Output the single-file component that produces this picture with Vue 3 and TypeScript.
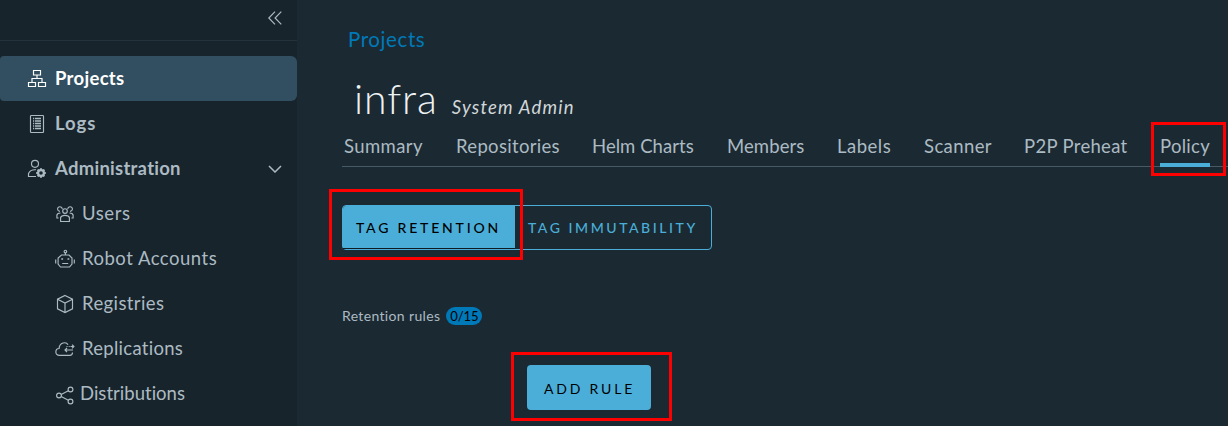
<script setup lang="ts">
type IconName = 'projects' | 'logs' | 'admin' | 'users' | 'robot' | 'cube' | 'cloud' | 'share'

interface NavItem {
  label: string
  icon: IconName
  kind: 'top' | 'sub'
  active?: boolean
  expandable?: boolean
  tracking: number
}

interface Tab {
  label: string
  width: number
  tracking: number
  active?: boolean
}

const navItems: NavItem[] = [
  { label: 'Projects', icon: 'projects', kind: 'top', active: true, tracking: 0.3 },
  { label: 'Logs', icon: 'logs', kind: 'top', tracking: 0.9 },
  { label: 'Administration', icon: 'admin', kind: 'top', expandable: true, tracking: 0.26 },
  { label: 'Users', icon: 'users', kind: 'sub', tracking: 0.6 },
  { label: 'Robot Accounts', icon: 'robot', kind: 'sub', tracking: 0.5 },
  { label: 'Registries', icon: 'cube', kind: 'sub', tracking: 0.4 },
  { label: 'Replications', icon: 'cloud', kind: 'sub', tracking: 0.28 },
  { label: 'Distributions', icon: 'share', kind: 'sub', tracking: 0.02 },
]

const tabs: Tab[] = [
  { label: 'Summary', width: 112, tracking: 0.4 },
  { label: 'Repositories', width: 136, tracking: 0.32 },
  { label: 'Helm Charts', width: 135, tracking: 0.05 },
  { label: 'Members', width: 110, tracking: 0.1 },
  { label: 'Labels', width: 87, tracking: 0.5 },
  { label: 'Scanner', width: 100, tracking: 0.4 },
  { label: 'P2P Preheat', width: 136, tracking: 0.32 },
  { label: 'Policy', width: 50, tracking: 0.3, active: true },
]
</script>

<template>
  <div class="app">
    <aside class="sidebar">
      <div class="collapse">
        <svg class="collapse-icon" viewBox="0 0 14 14"><path d="M7 .7.8 7 7 13.300M13.300.7 7.100 7l6.200 6.300" /></svg>
      </div>
      <nav class="nav">
        <a v-for="item in navItems" :key="item.label" class="nav-item" :class="[item.kind, item.icon, { active: item.active }]">
          <svg class="icon" viewBox="0 0 20 20">
            <template v-if="item.icon === 'projects'">
              <path d="M6.500 1.500h7v4.500h-7zM1.500 13.500h7v4h-7zM11.500 13.500h7v4h-7zM10 6v3.500M5 13v-3.500h10V13" />
            </template>
            <template v-else-if="item.icon === 'logs'">
              <rect x="3.500" y="1.500" width="13" height="17" rx=".7" />
              <path d="M6 4.500h1.200M8 4.500h6M6 7h1.200M8 7h6M6 9.500h1.200M8 9.500h6M6 12h1.200M8 12h6M6 14.500h1.200M8 14.500h6" stroke-width="1.400" />
            </template>
            <template v-else-if="item.icon === 'admin'">
              <circle cx="8" cy="4.800" r="3.500" />
              <path d="M9 17.500H1.500v-3c1.200-2.600 4-4 7.500-3.700" />
              <circle cx="14" cy="14" r="2.900" stroke-width="2.200" />
              <path d="M14 9.200v2M14 16.800v2M9.200 14h2M16.800 14h2M10.600 10.600l1.400 1.400M16 16l1.400 1.400M17.400 10.600 16 12M12 16l-1.400 1.400" stroke-width="2" />
            </template>
            <template v-else-if="item.icon === 'users'">
              <circle cx="10" cy="7" r="2.300" />
              <path d="M5.600 17.500v-4c.4-1.400 1.700-2.100 4.400-2.100s4 .7 4.400 2.100v4zM7.200 5A2.300 2.300 0 1 0 5 7.300M12.800 5a2.300 2.300 0 1 1 2.200 2.300M5.500 9C3.500 9 2.200 9.700 1.900 11v3h1.700M14.500 9c2 0 3.300.7 3.600 2v3h-1.700" />
            </template>
            <template v-else-if="item.icon === 'robot'">
              <circle cx="10.400" cy="2.500" r="1.300" />
              <path d="M10.400 4v2M6.500 6h7.500l3 3v6l-2.500 3h-9l-2.400-3V9zM.7 10.500v4M19.300 10.500v4M7.200 14.500h6" />
              <path d="M6.300 10h1.800M12.500 10h1.800" stroke-width="1.600" />
            </template>
            <template v-else-if="item.icon === 'cube'">
              <path d="m10 1.500 7.500 3.700v9.600L10 18.500l-7.500-3.700V5.200zM2.500 5.200 10 9l7.500-3.800M10 9v9.500" />
            </template>
            <template v-else-if="item.icon === 'cloud'">
              <path d="M17.500 13.500c0 1.900-.9 2.800-2.700 2.800H4.500c-5 0-4.600-6.600-.4-6.800C4.400 3.500 11.200 2.300 13 5.700" />
              <path d="M10 11h8M12 9l-2 2 2 2M11.500 7.500h1M13.700 7.500h1M15.500 7.500h3.200M17 5.700l1.900 1.800L17 9.300" />
            </template>
            <template v-else>
              <circle cx="4" cy="10.500" r="2.400" />
              <circle cx="15.500" cy="4.500" r="2.400" />
              <circle cx="15.500" cy="16.500" r="2.400" />
              <path d="m6.200 9.400 7.100-3.700M6.200 11.600l7.100 3.700" />
            </template>
          </svg>
          <span class="nav-label" :style="{ letterSpacing: `${item.tracking}px` }">{{ item.label }}</span>
          <svg v-if="item.expandable" class="chevron" viewBox="0 0 14 8"><path d="m1 1 6 6 6-6" /></svg>
        </a>
      </nav>
    </aside>

    <main class="content">
      <a class="breadcrumb">Projects</a>
      <header class="heading">
        <h1 class="title">infra</h1>
        <em class="role">System Admin</em>
      </header>
      <nav class="tabs">
        <a v-for="tab in tabs" :key="tab.label" class="tab" :style="{ width: `${tab.width}px`, letterSpacing: `${tab.tracking}px` }">
          <span :class="{ 'tab-active': tab.active }">{{ tab.label }}</span>
        </a>
      </nav>
      <div class="switcher">
        <button class="switch selected"><span>TAG RETENTION</span></button>
        <button class="switch"><span>TAG IMMUTABILITY</span></button>
      </div>
      <div class="rules">
        <span class="rules-label">Retention rules</span>
        <span class="badge">0/15</span>
      </div>
      <button class="add-rule">ADD RULE</button>
    </main>

    <div class="callout callout-policy"></div>
    <div class="callout callout-retention"></div>
    <div class="callout callout-add"></div>
  </div>
</template>

<style>
body {
  margin: 0;
  overflow: hidden;
}
</style>

<style scoped>
.app {
  position: relative;
  display: flex;
  width: 1228px;
  height: 426px;
  overflow: hidden;
  background: #1b2a32;
  color: #acbac3;
  font: 18.5px/24px Lato, 'Open Sans', sans-serif;
  font-variant-ligatures: none;
  white-space: nowrap;
}
svg {
  display: block;
  flex: none;
  fill: none;
  stroke: currentColor;
}
.sidebar {
  flex: none;
  width: 297px;
  background: #17242b;
}
.collapse {
  display: flex;
  box-sizing: border-box;
  height: 41px;
  padding: 11px 15px 0 0;
  justify-content: flex-end;
  border-bottom: 1px solid #24333b;
}
.collapse-icon {
  width: 14px;
  height: 14px;
  stroke-width: 1.2;
}
.nav {
  padding-top: 15px;
}
.nav-item {
  display: flex;
  box-sizing: border-box;
  height: 45px;
  align-items: center;
  padding: 0 15px 0 27px;
}
.nav-item.sub {
  padding-left: 55px;
}
.nav-item.active {
  background: #324f61;
  color: #fff;
  border-radius: 4px 6px 6px 4px;
}
.icon {
  width: 20px;
  height: 20px;
  margin: 1px 8px 0 0;
  stroke-width: 1.15;
}
.sub .icon {
  margin-right: 7px;
}
.sub.share .icon {
  margin: 2px 5px 0 0;
}
.nav-label {
  padding-bottom: 1px;
}
.sub .nav-label {
  padding-bottom: 2px;
}
.top .nav-label {
  font-weight: 700;
}
.chevron {
  width: 14px;
  height: 8px;
  margin-left: auto;
  stroke-width: 1.5;
}
.content {
  display: flex;
  flex: 1;
  flex-direction: column;
  align-items: flex-start;
  min-width: 0;
  padding-left: 45px;
}
.breadcrumb {
  margin: 27px 0 0 6px;
  color: #0079b8;
  font-size: 20.5px;
  line-height: 24px;
  letter-spacing: 0.6px;
}
.heading {
  display: flex;
  height: 48px;
  margin: 24px 0 0 12px;
  align-items: baseline;
}
.title {
  margin: 0;
  color: #eef2f4;
  font-size: 41px;
  font-weight: 300;
  line-height: 48px;
  letter-spacing: 0.9px;
}
.role {
  margin-left: 14px;
  color: #d2d7da;
  font-size: 18.5px;
  letter-spacing: 1.2px;
}
.tabs {
  display: flex;
  box-sizing: border-box;
  width: 886px;
  height: 44px;
  padding: 11px 0 0 2px;
  border-bottom: 1px solid #495a67;
}
.tab {
  flex: none;
}
.tab-active {
  display: block;
  height: 29px;
  border-bottom: 4px solid #4aaed9;
}
.switcher {
  display: flex;
  box-sizing: border-box;
  width: 370px;
  height: 45px;
  margin-top: 38px;
  border: 1px solid #4aaed9;
  border-radius: 4px;
}
.switch {
  height: 43px;
  padding: 0 0 0 13px;
  border: 0;
  background: none;
  color: #4aaed9;
  font: 500 14px/43px Lato, sans-serif;
  letter-spacing: 2.55px;
  text-align: left;
}
.selected {
  width: 172px;
  height: 42px;
  background: #4aaed9;
  color: #000;
  border-radius: 3px 0 0 0;
  box-shadow: 0 1px #101c23;
  letter-spacing: 2.8px;
}
.rules {
  display: flex;
  height: 18px;
  margin-top: 57px;
  gap: 6px;
  align-items: center;
  font-size: 14px;
  line-height: 18px;
}
.rules-label {
  letter-spacing: 0.35px;
}
.badge {
  width: 36px;
  height: 18px;
  border-radius: 9px;
  background: #0079b8;
  color: #000;
  font-size: 13px;
  line-height: 18px;
  text-align: center;
}
.add-rule {
  width: 124px;
  height: 45px;
  margin: 40px 0 0 185px;
  padding: 2px 0 0 1px;
  border: 0;
  border-radius: 4px;
  background: #4aaed9;
  color: #000;
  font: 14px/43px Lato, sans-serif;
  letter-spacing: 2.8px;
}
.callout {
  position: absolute;
  box-sizing: border-box;
  border: 3px solid #f00;
}
.callout-policy {
  left: 1151px;
  top: 122px;
  width: 75px;
  height: 54px;
}
.callout-retention {
  left: 329px;
  top: 189px;
  width: 194px;
  height: 71px;
}
.callout-add {
  left: 511px;
  top: 352px;
  width: 161px;
  height: 69px;
}
</style>
